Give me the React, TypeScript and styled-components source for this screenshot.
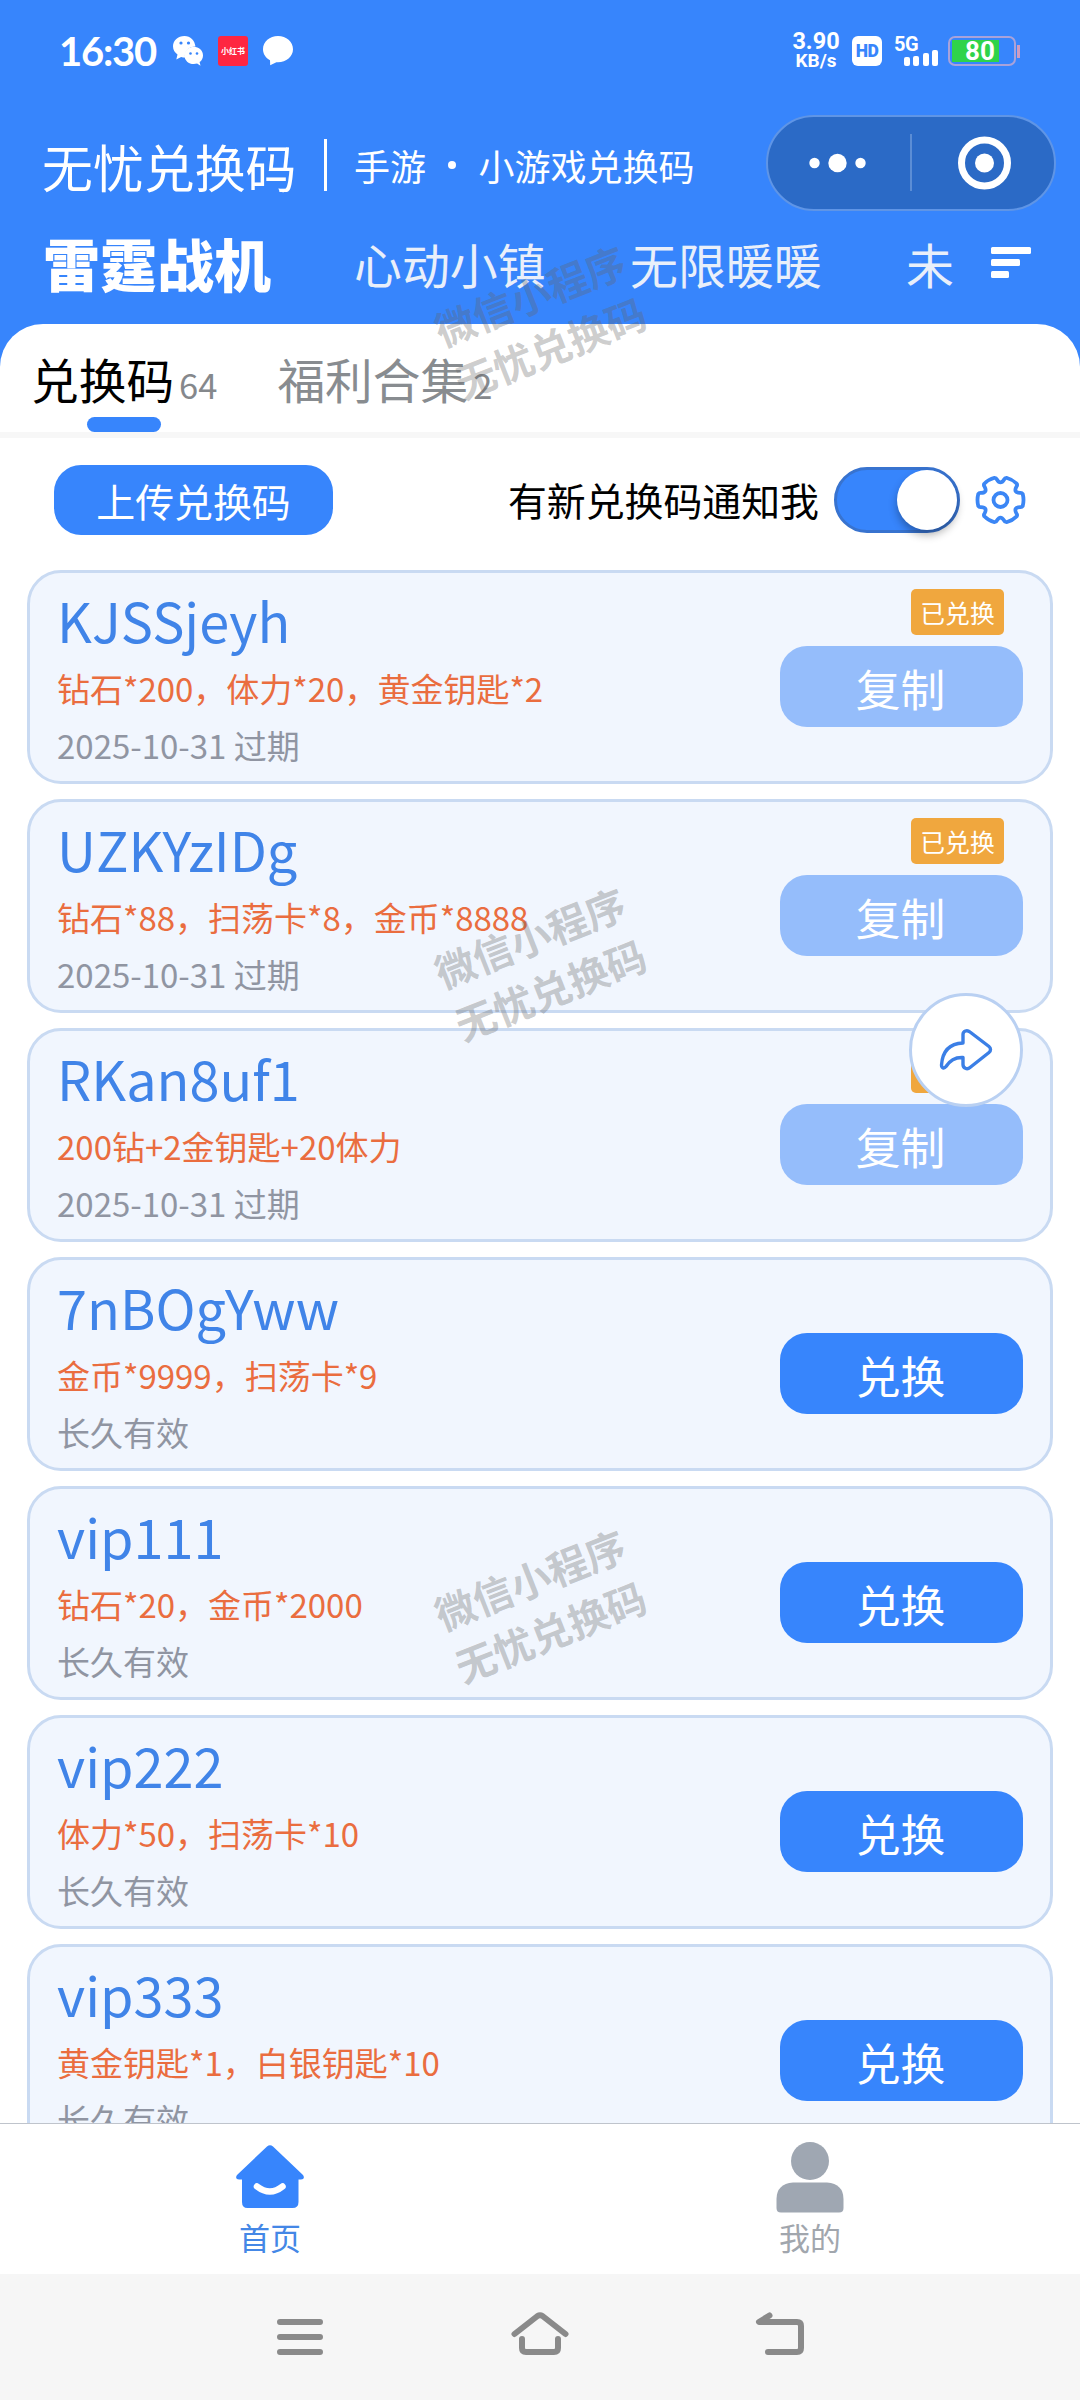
import React from "react";
import styled, { createGlobalStyle } from "styled-components";

const BLUE = "#3785fc";

const GlobalStyle = createGlobalStyle`
  * { box-sizing: border-box; }
  html, body { margin: 0; padding: 0; }
  body {
    width: 1080px;
    height: 2400px;
    overflow: hidden;
    background: #fff;
    font-family: "Noto Sans CJK SC", "Noto Sans", sans-serif;
  }
`;

const Screen = styled.div`
  position: relative;
  display: flex;
  flex-direction: column;
  width: 1080px;
  height: 2400px;
  overflow: hidden;
  background: #fff;
`;

const Header = styled.header`
  height: 367px;
  flex: none;
  background: ${BLUE};
  color: #fff;
`;

const StatusBar = styled.div`
  display: flex;
  justify-content: space-between;
  height: 100px;
  padding: 0 60px 0 59px;
`;

const StatusSide = styled.div`
  display: flex;
  align-items: center;
  height: 102px;
`;

const Clock = styled.span`
  width: 114px;
  font: 700 40px/40px Lato, sans-serif;
  letter-spacing: -1.2px;
`;

const StatusIcon = styled.svg`
  display: block;
  flex: none;
  width: 30px;
  height: 30px;
  margin-right: 15px;
`;

const RedApp = styled.span`
  width: 30px;
  height: 30px;
  margin-right: 15px;
  border-radius: 3px;
  background: #fe2641;
  font-size: 8px;
  font-weight: 700;
  line-height: 30px;
  text-align: center;
  white-space: nowrap;
`;

const Speed = styled.div`
  display: flex;
  flex-direction: column;
  align-items: center;
  width: 46px;
  margin: -1px 13px 0 0;
  font-family: Roboto, sans-serif;
  font-weight: 700;
`;

const SpeedValue = styled.span`
  font-size: 23.5px;
  line-height: 20px;
`;

const SpeedUnit = styled.span`
  font-size: 19px;
  line-height: 20px;
`;

const HdBadge = styled.span`
  width: 30px;
  height: 30px;
  margin-right: 12px;
  border-radius: 6px;
  background: #fff;
  color: ${BLUE};
  font: 900 17.5px/31px Roboto, sans-serif;
  letter-spacing: -0.5px;
  text-align: center;
`;

const Signal = styled.div`
  width: 44px;
  height: 30px;
  margin-right: 10px;
`;

const SignalLabel = styled.div`
  height: 14px;
  font: 700 20px/16px Roboto, sans-serif;
  letter-spacing: -0.5px;
`;

const SignalBars = styled.div`
  display: flex;
  align-items: flex-end;
  justify-content: flex-end;
  gap: 3.5px;
  height: 16px;
`;

const SignalBar = styled.i<{ $h: number }>`
  width: 6px;
  height: ${(p) => p.$h}px;
  border-radius: 2px;
  background: #fff;
`;

const Battery = styled.div`
  display: flex;
  align-items: center;
  width: 72px;
`;

const BatteryCase = styled.div`
  width: 68px;
  height: 30px;
  border: 2px solid #a9a2da;
  border-radius: 7px;
  padding: 2px;
`;

const BatteryFill = styled.div`
  width: 47px;
  height: 22px;
  padding-left: 13px;
  background: #2fd34a;
  font: 700 26px/23px Roboto, sans-serif;
`;

const BatteryCap = styled.i`
  width: 3px;
  height: 13px;
  margin-left: 1px;
  background: #cf9cc0;
`;

const TitleRow = styled.div`
  display: flex;
  align-items: center;
  height: 128px;
  padding: 0 24px 0 42px;
`;

const AppName = styled.h1`
  margin: 0;
  padding-top: 4px;
  width: 282px;
  font-size: 50.9px;
  font-weight: 400;
  line-height: 60px;
  white-space: nowrap;
`;

const TitleRule = styled.i`
  width: 3px;
  height: 52px;
  margin: 2px 27px 0 0;
  background: #fff;
`;

const Subtitle = styled.div`
  display: flex;
  align-items: center;
  padding-top: 2px;
  font-size: 36px;
  line-height: 44px;
  white-space: nowrap;
`;

const Dot = styled.i`
  width: 8px;
  height: 8px;
  margin: 0 22.5px 0 22px;
  border-radius: 50%;
  background: #fff;
`;

const Capsule = styled.div`
  display: flex;
  align-items: center;
  width: 290px;
  height: 96px;
  margin: -3px 0 0 auto;
  border: 2px solid #5f95e6;
  border-radius: 48px;
  background: #2b6ac6;
`;

const CapsuleHalf = styled.div`
  display: flex;
  flex: 1;
  align-items: center;
  justify-content: center;
`;

const CapsuleRule = styled.i`
  width: 2px;
  height: 57px;
  background: #5b8dd5;
`;

const GameRow = styled.nav`
  display: flex;
  align-items: center;
  height: 72px;
  padding: 0 49px 0 43px;
`;

const Game = styled.span<{ $active?: boolean; $w: number }>`
  width: ${(p) => p.$w}px;
  flex: none;
  margin-top: ${(p) => (p.$active ? -4 : -2)}px;
  color: ${(p) => (p.$active ? "#fff" : "#e9effa")};
  font-size: ${(p) => (p.$active ? 57 : 47.9)}px;
  font-weight: ${(p) => (p.$active ? 900 : 400)};
  line-height: 72px;
  white-space: nowrap;
`;

const SortButton = styled.div`
  display: flex;
  flex-direction: column;
  gap: 5px;
  margin: -4px 0 0 auto;
  width: 40px;
`;

const SortBar = styled.i<{ $w: number }>`
  width: ${(p) => p.$w}px;
  height: 7px;
  border-radius: 1.5px;
  background: #fff;
`;

const Sheet = styled.main`
  flex: none;
  height: 1800px;
  margin-top: -43px;
  overflow: hidden;
  border-radius: 43px 43px 0 0;
  background: #fff;
`;

const Tabs = styled.div`
  display: flex;
  height: 114px;
  padding-left: 31px;
  border-bottom: 6px solid #f7f7f7;
`;

const Tab = styled.div<{ $active?: boolean }>`
  display: flex;
  flex-direction: column;
  align-items: center;
  margin-right: 60px;
  color: ${(p) => (p.$active ? "#000" : "#888c90")};
`;

const TabLabel = styled.div`
  height: 93px;
  font-size: 47.7px;
  line-height: 109px;
  white-space: nowrap;
`;

const TabCount = styled.span`
  margin-left: 5px;
  color: #85888c;
  font-size: 34.5px;
`;

const TabMark = styled.i`
  width: 74px;
  height: 15px;
  border-radius: 8px;
  background: ${BLUE};
`;

const Toolbar = styled.div`
  display: flex;
  align-items: center;
  height: 132px;
  padding: 0 53px 8px 54px;
`;

const UploadButton = styled.button`
  width: 279px;
  height: 70px;
  margin-right: auto;
  padding: 0;
  border: 0;
  border-radius: 27px;
  background: ${BLUE};
  color: #fff;
  font: 400 38.9px/68px "Noto Sans CJK SC", sans-serif;
`;

const NotifyText = styled.span`
  margin-right: 15px;
  margin-top: -2px;
  font-size: 38.9px;
  line-height: 60px;
`;

const Switch = styled.div`
  display: flex;
  justify-content: flex-end;
  width: 126px;
  height: 66px;
  margin-right: 14px;
  border: 3px solid #3873cf;
  border-radius: 33px;
  background: ${BLUE};
`;

const Knob = styled.i`
  width: 60px;
  height: 60px;
  border-radius: 50%;
  background: #fff;
  box-shadow: 0 5px 9px rgba(0, 0, 0, 0.3);
`;

const CardList = styled.div`
  display: flex;
  flex-direction: column;
  gap: 15px;
  padding: 0 27px;
`;

const Card = styled.section`
  display: flex;
  flex: none;
  justify-content: space-between;
  height: 214px;
  padding: 13px 27px 0 27px;
  border: 3px solid #c9daf2;
  border-radius: 34px;
  background: #f1f6fe;
`;

const CardText = styled.div`
  display: flex;
  flex-direction: column;
  white-space: nowrap;
`;

const Code = styled.div`
  height: 75px;
  color: #4084e8;
  font-size: 54px;
  line-height: 67px;
`;

const Reward = styled.div`
  height: 57px;
  color: #ea6d3f;
  font-size: 33px;
  line-height: 54px;
`;

const Expiry = styled.div`
  color: #9095a2;
  font-size: 33px;
  line-height: 54px;
`;

const CardAction = styled.div`
  display: flex;
  flex-direction: column;
  width: 243px;
  padding-top: 3px;
`;

const BadgeSlot = styled.div`
  height: 57px;
  padding-left: 131px;
`;

const Badge = styled.div`
  width: 93px;
  height: 46px;
  border-radius: 5px;
  background: #f0a73e;
  color: #fff;
  font-size: 24.8px;
  line-height: 47px;
  text-align: center;
`;

const ActionButton = styled.button<{ $used: boolean }>`
  width: 243px;
  height: 81px;
  padding: 3px 2px 0 0;
  border: 0;
  border-radius: 27px;
  background: ${(p) => (p.$used ? "#95bdfb" : BLUE)};
  color: #fff;
  font: 400 44.8px/76px "Noto Sans CJK SC", sans-serif;
`;

const ShareButton = styled.div`
  position: absolute;
  left: 909px;
  top: 993px;
  display: flex;
  align-items: center;
  justify-content: center;
  width: 114px;
  height: 114px;
  border: 3px solid #b9d0f2;
  border-radius: 50%;
  background: #fff;
`;

const Watermark = styled.div<{ $y: number }>`
  position: absolute;
  left: 390px;
  top: ${(p) => p.$y - 57}px;
  width: 300px;
  color: rgba(100, 100, 100, 0.32);
  font-size: 40.2px;
  font-weight: 700;
  line-height: 56px;
  text-align: center;
  transform: rotate(-21.5deg);
  pointer-events: none;
`;

const BottomTabs = styled.nav`
  display: flex;
  flex: none;
  height: 151px;
  margin-top: -1px;
  border-top: 1px solid #bfc4cc;
  background: #fff;
  z-index: 1;
`;

const BottomTab = styled.div<{ $active?: boolean }>`
  display: flex;
  flex: 1;
  flex-direction: column;
  align-items: center;
  padding-top: 17px;
  color: ${(p) => (p.$active ? "#4487e6" : "#a1a6ad")};
  font-size: 31px;
  line-height: 45px;
`;

const TabIcon = styled.svg`
  display: block;
  width: 72px;
  height: 73px;
`;

const SystemNav = styled.footer`
  display: flex;
  flex: none;
  align-items: flex-start;
  justify-content: center;
  gap: 180px;
  height: 127px;
  padding-top: 33px;
  background: #f6f6f6;
`;

const NavIcon = styled.svg`
  display: block;
  width: 60px;
  height: 60px;
  fill: none;
  stroke: #8a8a8a;
  stroke-width: 6;
  stroke-linecap: round;
  stroke-linejoin: round;
`;

type Gift = { code: string; reward: string; expiry: string; used: boolean };

const gifts: Gift[] = [
  { code: "KJSSjeyh", reward: "钻石*200，体力*20，黄金钥匙*2", expiry: "2025-10-31 过期", used: true },
  { code: "UZKYzIDg", reward: "钻石*88，扫荡卡*8，金币*8888", expiry: "2025-10-31 过期", used: true },
  { code: "RKan8uf1", reward: "200钻+2金钥匙+20体力", expiry: "2025-10-31 过期", used: true },
  { code: "7nBOgYww", reward: "金币*9999，扫荡卡*9", expiry: "长久有效", used: false },
  { code: "vip111", reward: "钻石*20，金币*2000", expiry: "长久有效", used: false },
  { code: "vip222", reward: "体力*50，扫荡卡*10", expiry: "长久有效", used: false },
  { code: "vip333", reward: "黄金钥匙*1，白银钥匙*10", expiry: "长久有效", used: false },
];

// Six-toothed gear outline around the origin: flat tooth tips joined by curved notches.
function gearPath(): string {
  const at = (r: number, deg: number) => {
    const a = (deg * Math.PI) / 180;
    return `${(r * Math.cos(a)).toFixed(2)} ${(r * Math.sin(a)).toFixed(2)}`;
  };
  let d = `M${at(23, -15)}`;
  for (let k = 0; k < 6; k++) {
    const t = k * 60;
    d += ` Q${at(23.8, t)} ${at(23, t + 15)}`;
    d += ` Q${at(22.6, t + 19)} ${at(20.8, t + 20)}`;
    d += ` Q${at(14.6, t + 30)} ${at(20.8, t + 40)}`;
    d += ` Q${at(22.6, t + 41)} ${at(23, t + 45)}`;
  }
  return d + " Z";
}

function GiftCard({ gift }: { gift: Gift }) {
  return (
    <Card>
      <CardText>
        <Code>{gift.code}</Code>
        <Reward>{gift.reward}</Reward>
        <Expiry>{gift.expiry}</Expiry>
      </CardText>
      <CardAction>
        <BadgeSlot>{gift.used && <Badge>已兑换</Badge>}</BadgeSlot>
        <ActionButton $used={gift.used}>{gift.used ? "复制" : "兑换"}</ActionButton>
      </CardAction>
    </Card>
  );
}

export default function App() {
  return (
    <Screen>
      <GlobalStyle />
      <Header>
        <StatusBar>
          <StatusSide>
            <Clock>16:30</Clock>
            <StatusIcon viewBox="0 0 30 30">
              <path fill="#fff" d="M11.5 0C5 0 0 4.600 0 10.300c0 3.400 1.700 6.200 4.500 8.200L3.300 23.500l4.800-2.500c1.300.4 2.600.6 4 .6-1.300-6.500 4-11 10.400-11C21.700 4.500 17.500 0 11.500 0z" />
              <path fill="#fff" d="M20.800 10.800c-5.300 0-9.300 3.800-9.300 8.600s4 8.700 9.300 8.700c1.200 0 2.300-.2 3.300-.5l3.400 2.200-.9-3.700c2.100-1.500 3.400-4 3.400-6.700 0-4.800-4-8.600-9.200-8.600z" />
              <g fill={BLUE}>
                <circle cx="8" cy="7" r="1.600" />
                <circle cx="15.500" cy="7" r="1.600" />
                <circle cx="17.500" cy="17.500" r="1.300" />
                <circle cx="24" cy="17.500" r="1.300" />
              </g>
            </StatusIcon>
            <RedApp>小红书</RedApp>
            <StatusIcon viewBox="0 0 30 30">
              <path fill="#fff" d="M15 0C6.700 0 0 5.800 0 13.200c0 4.600 2.700 8.700 7 11l.2 5 6.200-3h1.600c8.300 0 15-5.700 15-13S23.300 0 15 0z" />
            </StatusIcon>
          </StatusSide>
          <StatusSide>
            <Speed>
              <SpeedValue>3.90</SpeedValue>
              <SpeedUnit>KB/s</SpeedUnit>
            </Speed>
            <HdBadge>HD</HdBadge>
            <Signal>
              <SignalLabel>5G</SignalLabel>
              <SignalBars>
                <SignalBar $h={9} />
                <SignalBar $h={10} />
                <SignalBar $h={13} />
                <SignalBar $h={16} />
              </SignalBars>
            </Signal>
            <Battery>
              <BatteryCase>
                <BatteryFill>80</BatteryFill>
              </BatteryCase>
              <BatteryCap />
            </Battery>
          </StatusSide>
        </StatusBar>
        <TitleRow>
          <AppName>无忧兑换码</AppName>
          <TitleRule />
          <Subtitle>
            手游
            <Dot />
            小游戏兑换码
          </Subtitle>
          <Capsule>
            <CapsuleHalf>
              <svg width="62" height="20" viewBox="0 0 62 20" fill="#fff">
                <circle cx="6.500" cy="10" r="5.200" />
                <circle cx="29.500" cy="10" r="9.200" />
                <circle cx="52.500" cy="10" r="5.200" />
              </svg>
            </CapsuleHalf>
            <CapsuleRule />
            <CapsuleHalf>
              <svg width="56" height="54" viewBox="0 0 56 54">
                <circle cx="29.500" cy="27" r="23" fill="none" stroke="#fff" strokeWidth="7" />
                <circle cx="29.500" cy="27" r="9.500" fill="#fff" />
              </svg>
            </CapsuleHalf>
          </Capsule>
        </TitleRow>
        <GameRow>
          <Game $active $w={311}>雷霆战机</Game>
          <Game $w={276}>心动小镇</Game>
          <Game $w={276}>无限暖暖</Game>
          <Game $w={50}>未</Game>
          <SortButton>
            <SortBar $w={40} />
            <SortBar $w={29} />
            <SortBar $w={18} />
          </SortButton>
        </GameRow>
      </Header>

      <Sheet>
        <Tabs>
          <Tab $active>
            <TabLabel>
              兑换码<TabCount>64</TabCount>
            </TabLabel>
            <TabMark />
          </Tab>
          <Tab>
            <TabLabel>
              福利合集<TabCount>2</TabCount>
            </TabLabel>
          </Tab>
        </Tabs>
        <Toolbar>
          <UploadButton>上传兑换码</UploadButton>
          <NotifyText>有新兑换码通知我</NotifyText>
          <Switch>
            <Knob />
          </Switch>
          <svg width="53" height="52" viewBox="-26.5 -26 53 52" fill="none" stroke="#3b86f5" strokeWidth="3.800" strokeLinejoin="round">
            <path d={gearPath()} />
            <circle cx="0" cy="0" r="7" />
          </svg>
        </Toolbar>
        <CardList>
          {gifts.map((g) => (
            <GiftCard key={g.code} gift={g} />
          ))}
        </CardList>
      </Sheet>

      <BottomTabs>
        <BottomTab $active>
          <TabIcon viewBox="0 0 72 73">
            <path
              fill={BLUE}
              d="M33 5.500 Q36 3 39 5.500 L69 34 Q71.500 38 67 38.500 L64.500 38.500 V61 Q64.500 67 58.500 67 H13.500 Q8 67 8 61 V38.500 L5 38.500 Q.5 38 3 34 Z"
            />
            <path d="M23 45.500 Q36 55.500 48.500 45.500" fill="none" stroke="#fff" strokeWidth="6.500" strokeLinecap="round" />
          </TabIcon>
          首页
        </BottomTab>
        <BottomTab>
          <TabIcon viewBox="0 0 72 73" fill="#9fa7b2">
            <circle cx="36" cy="20" r="19" />
            <path d="M19 41.500 H53 Q69.500 43 69.500 58 V67 Q69.500 71.500 65 71.500 H7 Q2.500 71.500 2.500 67 V58 Q2.500 43 19 41.500 Z" />
          </TabIcon>
          我的
        </BottomTab>
      </BottomTabs>

      <SystemNav>
        <NavIcon viewBox="0 0 60 60">
          <path d="M10 15 H50 M10 30 H50 M10 45 H50" />
        </NavIcon>
        <NavIcon viewBox="0 0 60 60">
          <path d="M4.500 27 L27.500 9 Q30 7.500 32.500 9 L55.500 27 M12 32 V41 Q12 45 16 45 H44 Q48 45 48 41 V32" />
        </NavIcon>
        <NavIcon viewBox="0 0 60 60">
          <path d="M19.500 8.500 L9 15 H47 Q51 15 51 19 V41 Q51 45 47 45 H18" />
        </NavIcon>
      </SystemNav>

      <ShareButton>
        <svg width="54" height="46" viewBox="0 0 54 46" fill="none" stroke="#3b7fe6" strokeWidth="3.400" strokeLinejoin="round">
          <path d="M24 16 V7.500 C24 4 28 2.500 31 5 L50 19.500 C52 21 52 24 50 25.500 L31 40.500 C28 43 24 41 24 37.500 V30.500 C15 30 10.500 34 7 39.500 C5 42 2.500 41 2.500 38 C3.500 24 11 16.500 24 16 Z" />
        </svg>
      </ShareButton>
      <Watermark $y={322}>微信小程序<br />无忧兑换码</Watermark>
      <Watermark $y={964}>微信小程序<br />无忧兑换码</Watermark>
      <Watermark $y={1606}>微信小程序<br />无忧兑换码</Watermark>
    </Screen>
  );
}
